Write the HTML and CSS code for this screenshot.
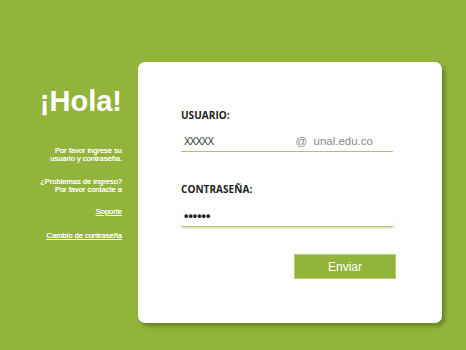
FILE: index.html
```html
<!DOCTYPE html>
<html lang="es">
<head>
<meta charset="utf-8">
<link rel="stylesheet" href="styles.css">
</head>
<body>
<div class="page">
  <aside class="side">
    <h1 class="hola">¡Hola!</h1>
    <p class="info">Por favor ingrese su<br>usuario y contraseña.</p>
    <p class="info">¿Problemas de ingreso?<br>Por favor contacte a</p>
    <p class="info link-row"><a href="#">Soporte</a></p>
    <p class="info link-row"><a href="#">Cambio de contraseña</a></p>
  </aside>
  <main class="card">
    <label class="label">USUARIO:</label>
    <div class="field">
      <span class="value">XXXXX</span>
      <span class="domain">@&nbsp; unal.edu.co</span>
    </div>
    <label class="label label-pass">CONTRASEÑA:</label>
    <div class="field field-pass">
      <span class="dots">••••••</span>
    </div>
    <div class="actions">
      <button class="btn">Enviar</button>
    </div>
  </main>
</div>
</body>
</html>
```
FILE: styles.css
```css
html, body {
  margin: 0;
  padding: 0;
  background: #93b43b;
  width: 466px;
  height: 350px;
  overflow: hidden;
}
.page {
  display: flex;
  align-items: flex-start;
}
.side {
  width: 122px;
  padding-right: 16px;
  text-align: right;
  color: #fff;
  font-family: "Liberation Sans", Arial, sans-serif;
}
.hola {
  margin: 83px 0 0 0;
  font-size: 29px;
  line-height: 36px;
  font-weight: bold;
}
.info {
  margin: 0;
  font-size: 7.5px;
  line-height: 8px;
  font-weight: normal;
  color: #fff;
  text-shadow: 0 0 0.3px #fff;
}
.hola + .info { margin-top: 28px; }
.info + .info { margin-top: 15px; }
.link-row { margin-top: 14px !important; }
.link-row + .link-row { margin-top: 16px !important; }
.info a {
  color: #fff;
  text-decoration: underline;
}
.card {
  margin-top: 62px;
  width: 261px;
  height: 261px;
  padding: 0 0 0 43px;
  background: #fff;
  border-radius: 7px;
  box-shadow: 3px 3px 4px rgba(70, 90, 20, 0.55);
  box-sizing: content-box;
  display: flex;
  flex-direction: column;
  font-family: "Liberation Sans", Arial, sans-serif;
}
.label {
  margin-top: 47px;
  font-family: "Open Sans", sans-serif;
  font-weight: bold;
  font-size: 10px;
  line-height: 12px;
  color: #222;
  letter-spacing: 0.05px;
}
.label-pass { margin-top: 31px; }
.field {
  width: 212px;
  margin-top: 10px;
  height: 21px;
  border-bottom: 1px solid #a9c46b;
  display: flex;
  align-items: center;
  box-sizing: border-box;
  padding-left: 3px;
}
.value {
  font-size: 10px;
  color: #333;
  letter-spacing: -0.8px;
}
.domain {
  margin-left: auto;
  margin-right: 20px;
  font-size: 11.5px;
  color: #888;
}
.field-pass {
  margin-top: 11px;
  box-shadow: 0 2px 2px -1px rgba(147, 180, 59, 0.5);
}
.dots {
  font-size: 12.5px;
  color: #222;
  letter-spacing: 0;
  font-weight: bold;
}
.actions {
  display: flex;
  width: 215px;
  justify-content: flex-end;
  margin-top: 27px;
}
.btn {
  width: 102px;
  height: 25px;
  border: 1px solid #b5cc78;
  background: #93b43b;
  color: #fff;
  font-family: "Liberation Sans", Arial, sans-serif;
  font-size: 12px;
  padding: 0;
  cursor: pointer;
}
```
